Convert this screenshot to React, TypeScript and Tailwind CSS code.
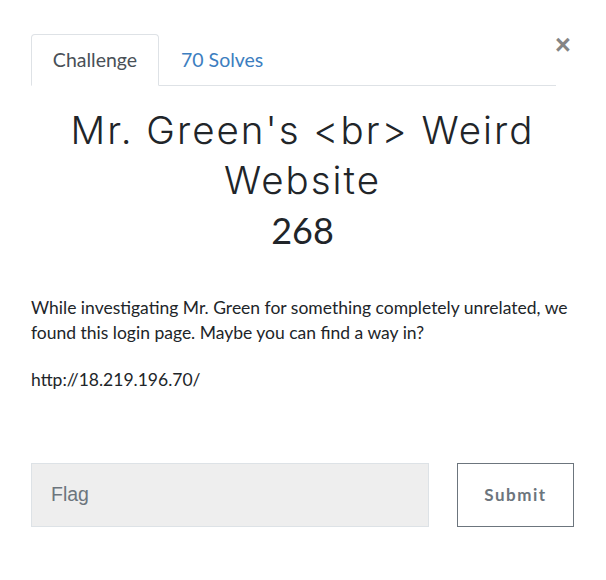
import React from "react";

export default function App() {
  return (
    <div className="w-[606px] h-[580px] bg-white font-['Lato','Liberation_Sans',sans-serif] text-[#212529] relative">
      {/* Close */}
      <button className="absolute left-[555px] top-[32px] text-[27px] leading-none font-bold text-[#858585] font-['Liberation_Sans',sans-serif]">
        ×
      </button>

      <div className="pt-[34px] pl-[31px] pr-[32px]">
        {/* Tabs */}
        <div className="flex w-[525px] border-b border-[#dee2e6] h-[52px]">
          <div className="w-[128px] h-[52px] -mb-px border border-[#dee2e6] border-b-white rounded-t-[4px] bg-white flex items-center justify-center text-[19.5px] text-[#495057]">
            Challenge
          </div>
          <div className="px-[22px] flex items-center text-[19.5px] text-[#3c7ec0]">70 Solves</div>
        </div>

        {/* Title */}
        <h1 className="mt-[19px] text-center font-['Inter',sans-serif] font-light text-[38.5px] leading-[50px] tracking-[2px] text-[#212529] px-[20px]">
          Mr. Green's &lt;br&gt; Weird Website
        </h1>
        <div className="text-center text-[36px] leading-[44px] mt-[3px]">268</div>

        {/* Description */}
        <div className="mt-[43px] text-[17.5px] leading-[25px]">
          <p>
            While investigating Mr. Green for something completely unrelated, we found this login page. Maybe you can
            find a way in?
          </p>
          <p className="mt-[22px]">http://18.219.196.70/</p>
        </div>

        {/* Flag form */}
        <div className="mt-[71px] flex items-start">
          <div className="w-[398px] h-[64px] bg-[#eeeeee] border border-[#dde2e6] flex items-center pl-[19px] text-[19.5px] text-[#6c757d] font-['Liberation_Sans',sans-serif]">
            Flag
          </div>
          <button className="ml-[28px] w-[117px] h-[64px] border border-[#6c757d] text-[#6c757d] font-bold text-[17px] tracking-[1.5px]">
            Submit
          </button>
        </div>
      </div>
    </div>
  );
}
